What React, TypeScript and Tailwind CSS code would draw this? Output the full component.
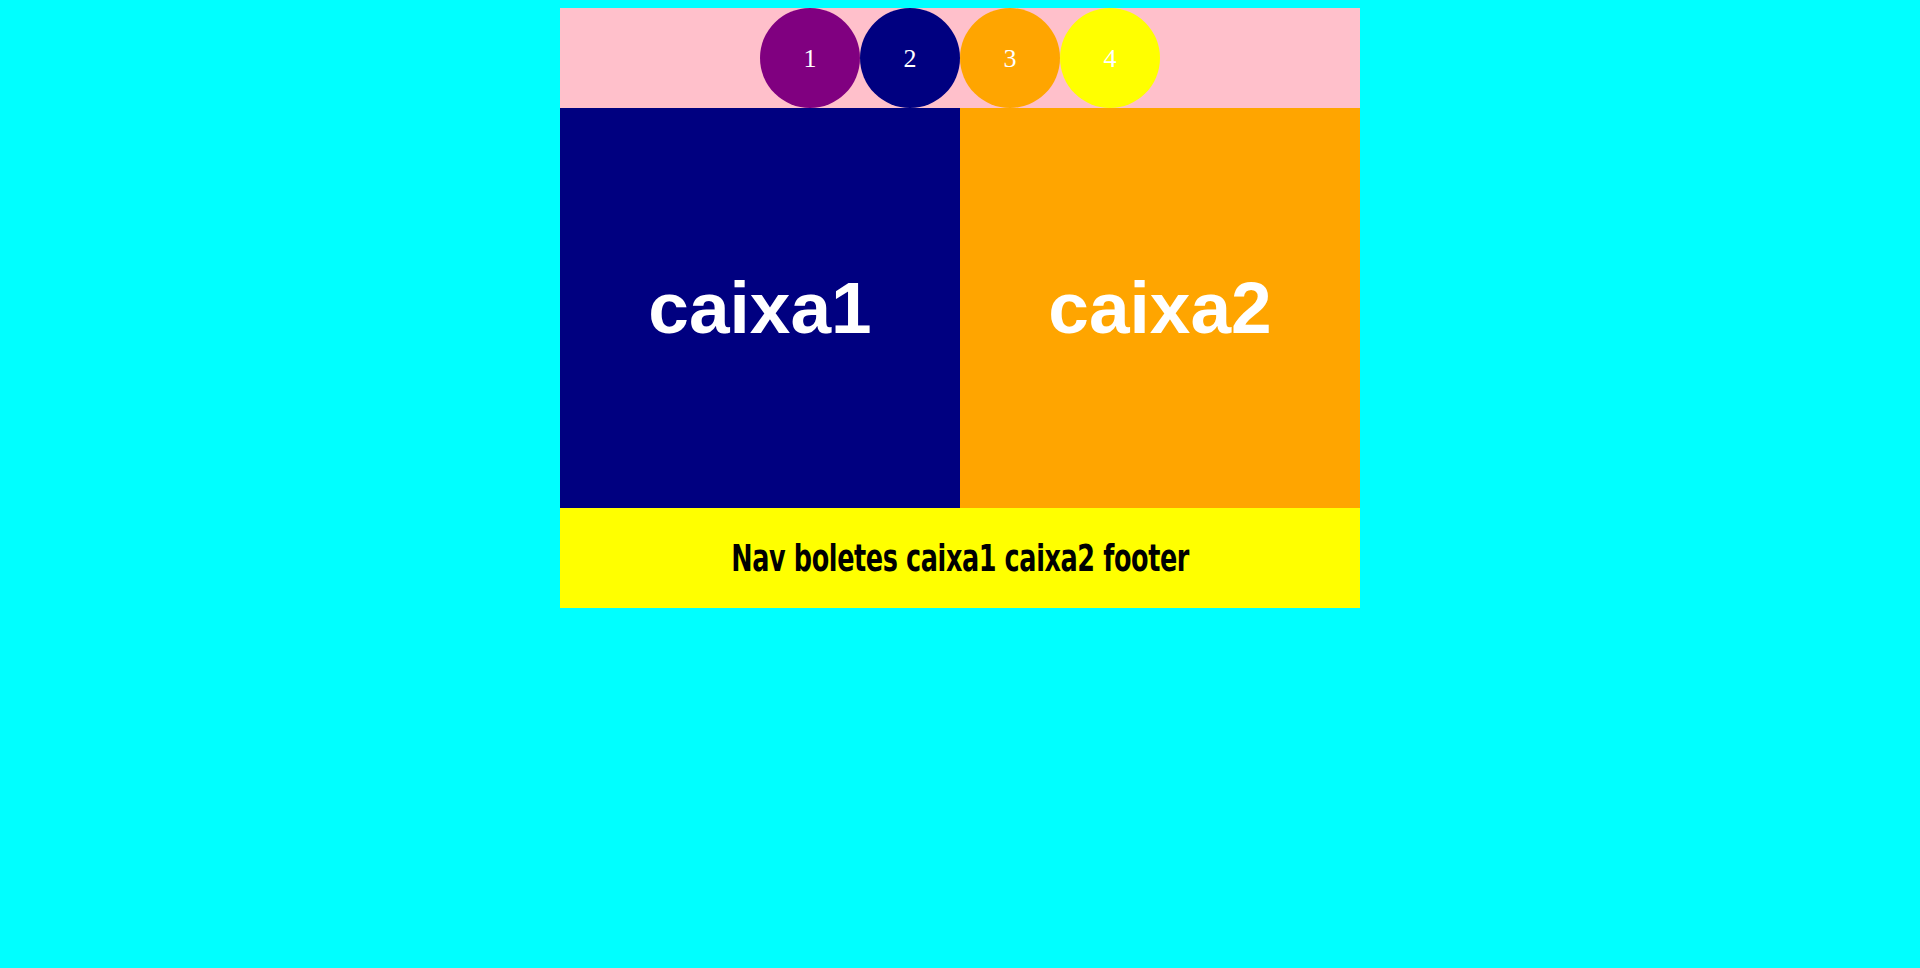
import React from 'react';

const dots = [
  { n: '1', bg: 'bg-[#800080]' },
  { n: '2', bg: 'bg-[#000080]' },
  { n: '3', bg: 'bg-[#ffa500]' },
  { n: '4', bg: 'bg-[#ffff00]' },
];

const App = () => {
  return (
    <div className="min-h-screen bg-[#00ffff] pt-2">
      <div className="w-[800px] mx-auto">
        {/* Nav with boletes */}
        <nav className="h-[100px] bg-[#ffc0cb] flex justify-center">
          {dots.map((d) => (
            <div
              key={d.n}
              className={`w-[100px] h-[100px] rounded-full flex items-center justify-center text-white text-[26px] font-['Liberation_Serif',serif] ${d.bg}`}
            >
              {d.n}
            </div>
          ))}
        </nav>

        {/* Caixas */}
        <div className="flex">
          <div className="w-[400px] h-[400px] bg-[#000080] flex items-center justify-center text-white text-[73px] font-bold font-['Liberation_Sans',Arial,sans-serif]">
            caixa1
          </div>
          <div className="w-[400px] h-[400px] bg-[#ffa500] flex items-center justify-center text-white text-[73px] font-bold font-['Liberation_Sans',Arial,sans-serif]">
            caixa2
          </div>
        </div>

        {/* Footer */}
        <footer className="h-[100px] bg-[#ffff00] flex items-center justify-center">
          <h1 className="text-[38px] font-bold text-black scale-x-[0.745] whitespace-nowrap tracking-[-0.5px] font-['Impact','DejaVu_Sans_Condensed',sans-serif]">
            Nav boletes caixa1 caixa2 footer
          </h1>
        </footer>
      </div>
    </div>
  );
};

export default App;
